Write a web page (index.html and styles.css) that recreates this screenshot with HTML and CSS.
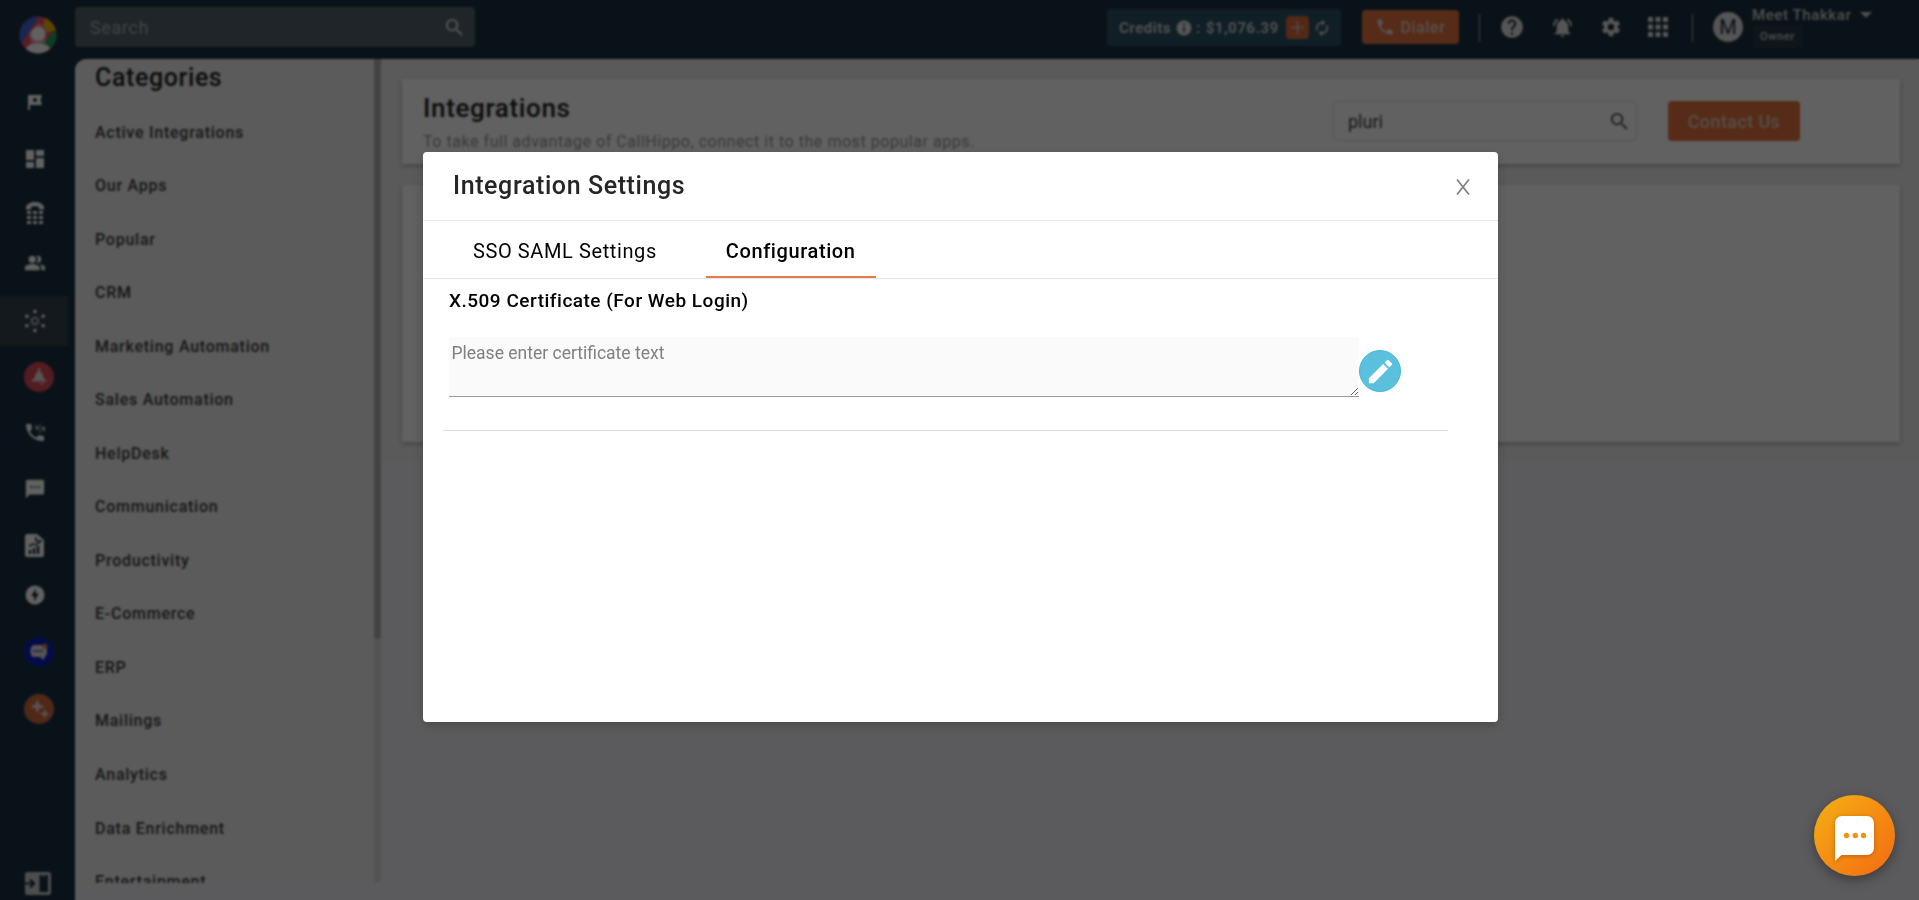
FILE: index.html
```html
<!DOCTYPE html>
<html lang="en">
<head>
    <meta charset="UTF-8">
    <meta name="viewport" content="width=device-width, initial-scale=1.0">
    <title>Integrations</title>
    <link rel="stylesheet" href="styles.css">
</head>
<body>

<div class="app">
    <!-- Sidebar -->
    <aside class="sidebar">
        <svg class="logo" width="38" height="38" viewBox="0 0 38 38">
            <defs><clipPath id="logoClip"><circle cx="19" cy="19" r="18.5"/></clipPath></defs>
            <g clip-path="url(#logoClip)">
                <rect width="38" height="38" fill="#e8505e"/>
                <path d="M0 0H20L2 28H0z" fill="#3c66d8"/>
                <path d="M27 0L38 4V14L28 16L24 9z" fill="#f2b50c"/>
                <path d="M38 12V36L25 27z" fill="#16a85a"/>
                <path d="M20 7L28 14L26 27H12L10 17z" fill="#e99ba6"/>
                <circle cx="19" cy="18" r="7" fill="#fff"/>
                <ellipse cx="19" cy="34" rx="12" ry="7" fill="#fff"/>
            </g>
        </svg>
        <nav class="side-nav">
            <a class="side-item"><svg width="16" height="17" viewBox="0 0 16 17"><path fill-rule="evenodd" d="M1 1h14l-1.500 5L15 11H3v5H1zM8 3.500l-2.500 2.500L8 8.500 10.500 6z"/></svg></a>
            <a class="side-item"><svg width="24" height="24" viewBox="0 0 24 24"><path d="M3 13h8V3H3v10zm0 8h8v-6H3v6zm10 0h8V11h-8v10zm0-18v6h8V3h-8z"/></svg></a>
            <a class="side-item side-dial"><svg width="18" height="23" viewBox="0 0 18 23"><path d="M9 0C4 0 0 2.500 0 5.500v2h5V5c2-1 6-1 8 0v2.500h5v-2C18 2.500 14 0 9 0z"/><path d="M1 9h4v3H1zm6 0h4v3H7zm6 0h4v3h-4zM1 14h4v3H1zm6 0h4v3H7zm6 0h4v3h-4zM1 19h4v3H1zm6 0h4v3H7zm6 0h4v3h-4z"/></svg></a>
            <a class="side-item side-people"><svg width="22" height="22" viewBox="0 0 24 24"><path d="M16.670 13.130C18.040 14.060 19 15.320 19 17v3h4v-3c0-2.180-3.570-3.470-6.330-3.870zM15 12c2.210 0 4-1.790 4-4s-1.790-4-4-4c-.47 0-.91.1-1.330.24a5.980 5.980 0 0 1 0 7.520c.42.14.86.24 1.330.24zM9 12a4 4 0 1 0 0-8 4 4 0 0 0 0 8zm0 1c-2.670 0-8 1.340-8 4v3h16v-3c0-2.660-5.330-4-8-4z"/></svg></a>
            <a class="side-item side-active"><svg width="24" height="24" viewBox="0 0 24 24"><circle cx="12" cy="12" r="3.200" fill="none" stroke="#b9bfc6" stroke-width="1.800"/><path d="M12 4v4M12 16v4M5 8l3 1.800M16 14.200l3 1.800M5 16l3-1.800M16 9.800L19 8" stroke="#5d6873" stroke-width="1"/><circle cx="12" cy="2.500" r="1.800"/><circle cx="12" cy="21.500" r="1.800"/><circle cx="3.800" cy="7.200" r="1.800"/><circle cx="20.200" cy="7.200" r="1.800"/><circle cx="3.800" cy="16.800" r="1.800"/><circle cx="20.200" cy="16.800" r="1.800"/></svg></a>
            <a class="side-item side-alert"><span class="side-badge red"><svg width="18" height="18" viewBox="0 0 18 18"><path d="M8.200 0h1.600l.4 3.500 2.800 3V9l4 4.500H1L5 9V6.500l2.800-3zM10 15h3.500a1.700 1.700 0 0 1-3.500 0z"/></svg></span></a>
            <a class="side-item"><svg width="22" height="22" viewBox="0 0 22 22"><path d="M5.500 9c1.400 2.900 3.800 5.200 6.700 6.600l2.200-2.200c.3-.3.700-.4 1-.2 1.100.4 2.300.6 3.600.6.600 0 1 .4 1 1V18c0 .6-.4 1-1 1C9.600 19 2 11.400 2 3c0-.600.4-1 1-1h3.500c.6 0 1 .4 1 1 0 1.200.2 2.400.6 3.600.1.300 0 .7-.2 1z"/><path d="M17 2l-5 5m0-4v4h4M15 11l5.500-5.500M16.500 5.500h4v4" fill="none" stroke="#fff" stroke-width="1"/></svg></a>
            <a class="side-item side-chat"><svg width="22" height="22" viewBox="0 0 24 24"><path d="M20 2H4c-1.100 0-1.990.9-1.990 2L2 22l4-4h14c1.100 0 2-.9 2-2V4c0-1.100-.9-2-2-2zM9 11H7V9h2v2zm4 0h-2V9h2v2zm4 0h-2V9h2v2z"/></svg></a>
            <a class="side-item side-report"><svg width="19" height="23" viewBox="0 0 19 23"><path d="M2 0h10l7 6v15a2 2 0 0 1-2 2H2a2 2 0 0 1-2-2V2C0 1 1 0 2 0z"/><path d="M5 20v-4M9 20v-6M13 20v-8" stroke="#1a313f" stroke-width="2.500"/><path d="M4 12l4-2 3 1 4-3M11 3v4h6" fill="none" stroke="#1a313f" stroke-width="1.500"/></svg></a>
            <a class="side-item side-bolt"><svg width="20" height="20" viewBox="0 0 20 20"><path fill-rule="evenodd" d="M10 .5a9.500 9.500 0 1 0 0 19 9.500 9.500 0 0 0 0-19zM10.800 3.500v5h3L9.200 16.500v-5.200h-3z"/></svg></a>
            <a class="side-item side-bot"><span class="side-badge blue"><svg width="20" height="18" viewBox="0 0 20 18"><path d="M5 2h10c2 0 3 2 3 6s-1 5-2 5.500L14.500 17 11 14H5c-2.500 0-3.500-2-3.500-6S3 2 5 2z"/><path d="M4.500 8h9" stroke="#2446c8" stroke-width="2" stroke-dasharray="2 1.500"/><circle cx="16" cy="3" r="2.600" fill="#c98722"/></svg></span></a>
            <a class="side-item"><span class="side-badge orange"><svg width="19" height="19" viewBox="0 0 18 18"><path d="M7 0l1.800 4.900L13.500 7 8.800 8.900 7 13.500 5.200 8.900.5 7l4.700-2.100zM14 9.500l1.300 3.200L18.500 14l-3.200 1.300L14 18.500l-1.300-3.200L9.500 14l3.200-1.300z"/></svg></span></a>
        </nav>
        <svg class="side-toggle" width="26" height="23" viewBox="0 0 26 23"><rect width="26" height="23" rx="2.500" fill="#c8cdce"/><rect x="14.500" y="3" width="8.500" height="17" fill="#1a313f"/><path d="M0 11.500h8M5 7.500l4 4-4 4" fill="none" stroke="#1a313f" stroke-width="2.200"/><path d="M17 3l1.500 2L20 3z" fill="#c8cdce"/></svg>
    </aside>

    <div class="main">
        <!-- Top bar -->
        <header class="topbar">
            <div class="top-search">
                <span>Search</span>
                <svg width="23" height="23" viewBox="0 0 24 24"><path d="M15.500 14h-.79l-.28-.27A6.470 6.470 0 0 0 16 9.500 6.500 6.500 0 1 0 9.500 16c1.610 0 3.090-.59 4.230-1.570l.27.28v.79l5 4.990L20.490 19l-4.990-5zm-6 0a4.500 4.500 0 1 1 0-9 4.500 4.500 0 0 1 0 9z"/></svg>
            </div>
            <div class="credits">
                <span>Credits</span>
                <svg class="info" width="16" height="16" viewBox="0 0 16 16"><path fill-rule="evenodd" d="M8 .5a7.500 7.500 0 1 0 0 15 7.500 7.500 0 0 0 0-15zM7.200 3.500h1.600v2H7.200zM7.200 6.800h1.600v5.400H7.200z"/></svg>
                <span class="colon">:</span>
                <span class="amount">$1,076.39</span>
                <span class="plus"><svg width="13" height="13" viewBox="0 0 13 13"><path d="M6.500 0v13M0 6.500h13" stroke="#d8c4bb" stroke-width="1.500"/></svg></span>
                <svg class="refresh" width="18" height="18" viewBox="0 0 24 24"><path d="M12 6v3l4-4-4-4v3a8 8 0 0 0-6.760 12.260L6.700 14.800A5.870 5.870 0 0 1 6 12a6 6 0 0 1 6-6zm6.760 1.740L17.300 9.200c.44.84.7 1.790.7 2.800a6 6 0 0 1-6 6v-3l-4 4 4 4v-3a8 8 0 0 0 6.760-12.260z"/></svg>
            </div>
            <button class="dialer"><svg width="20" height="20" viewBox="0 0 24 24"><path d="M6.620 10.790c1.440 2.830 3.760 5.140 6.590 6.590l2.200-2.200c.27-.27.67-.36 1.020-.24 1.120.37 2.330.57 3.570.57.55 0 1 .45 1 1V20c0 .55-.45 1-1 1-9.390 0-17-7.610-17-17 0-.55.45-1 1-1h3.500c.55 0 1 .45 1 1 0 1.250.2 2.450.57 3.570.11.35.03.74-.25 1.020l-2.200 2.200z"/></svg>Dialer</button>
            <span class="sep"></span>
            <div class="top-icons">
                <svg width="26" height="26" viewBox="0 0 24 24"><path d="M12 2C6.480 2 2 6.480 2 12s4.480 10 10 10 10-4.480 10-10S17.520 2 12 2zm1 17h-2v-2h2v2zm2.070-7.750l-.9.92C13.450 12.900 13 13.500 13 15h-2v-.5c0-1.100.45-2.100 1.170-2.830l1.240-1.260c.37-.36.59-.86.59-1.410 0-1.100-.9-2-2-2s-2 .9-2 2H8c0-2.210 1.790-4 4-4s4 1.790 4 4c0 .88-.36 1.680-.93 2.250z"/></svg>
                <svg width="23" height="23" viewBox="0 0 24 24"><path d="M7.580 4.080L6.150 2.650C3.750 4.480 2.170 7.300 2.030 10.500h2a8.450 8.450 0 0 1 3.550-6.420zm12.390 6.420h2c-.15-3.200-1.730-6.020-4.120-7.850l-1.420 1.430a8.500 8.500 0 0 1 3.540 6.420zM18 11c0-3.070-1.640-5.640-4.500-6.320V4c0-.83-.67-1.500-1.500-1.500s-1.500.67-1.500 1.500v.68C7.630 5.360 6 7.920 6 11v5l-2 2v1h16v-1l-2-2v-5zm-6 11c.14 0 .27-.01.4-.04.65-.14 1.180-.58 1.440-1.180.1-.24.15-.5.150-.78h-4c.01 1.100.9 2 2.010 2z"/></svg>
                <svg width="22" height="22" viewBox="0 0 24 24"><path d="M19.430 12.980c.04-.32.07-.64.07-.98s-.03-.66-.07-.98l2.110-1.650c.19-.15.24-.42.12-.64l-2-3.460c-.12-.22-.39-.3-.61-.22l-2.490 1c-.52-.4-1.080-.73-1.690-.98l-.38-2.650A.49.49 0 0 0 14 2h-4c-.25 0-.46.18-.49.42l-.38 2.650c-.61.25-1.170.59-1.690.98l-2.490-1c-.23-.09-.49 0-.61.22l-2 3.460c-.13.22-.07.49.12.64l2.110 1.650c-.04.32-.07.65-.07.98s.03.66.07.98l-2.110 1.650c-.19.15-.24.42-.12.64l2 3.460c.12.22.39.3.61.22l2.490-1c.52.4 1.080.73 1.690.98l.38 2.650c.03.24.24.42.49.42h4c.25 0 .46-.18.49-.42l.38-2.650c.61-.25 1.170-.59 1.690-.98l2.490 1c.23.09.49 0 .61-.22l2-3.460c.12-.22.07-.49-.12-.64l-2.110-1.650zM12 15.500a3.500 3.500 0 1 1 0-7 3.500 3.500 0 0 1 0 7z"/></svg>
                <svg width="20" height="20" viewBox="0 0 20 20"><path d="M0 0h5v5H0zM7.500 0h5v5h-5zM15 0h5v5h-5zM0 7.500h5v5H0zM7.500 7.500h5v5h-5zM15 7.500h5v5h-5zM0 15h5v5H0zM7.500 15h5v5h-5zM15 15h5v5h-5z"/></svg>
            </div>
            <span class="sep"></span>
            <div class="user">
                <span class="avatar">M</span>
                <div class="user-info">
                    <div class="user-name">Meet Thakkar <span class="caret"></span></div>
                    <span class="role">Owner</span>
                </div>
            </div>
        </header>

        <div class="page">
            <!-- Categories -->
            <div class="categories">
                <div class="category-list">
                    <h2>Categories</h2>
                    <ul>
                        <li>Active Integrations</li>
                        <li>Our Apps</li>
                        <li>Popular</li>
                        <li>CRM</li>
                        <li>Marketing Automation</li>
                        <li>Sales Automation</li>
                        <li>HelpDesk</li>
                        <li>Communication</li>
                        <li>Productivity</li>
                        <li>E-Commerce</li>
                        <li>ERP</li>
                        <li>Mailings</li>
                        <li>Analytics</li>
                        <li>Data Enrichment</li>
                        <li>Entertainment</li>
                    </ul>
                </div>
                <div class="scrollbar"><div class="scroll-thumb"></div></div>
            </div>

            <!-- Integrations -->
            <div class="content">
                <div class="card card-head">
                    <div class="card-title">
                        <h1>Integrations</h1>
                        <p>To take full advantage of CallHippo, connect it to the most popular apps.</p>
                    </div>
                    <div class="card-search">
                        <span>pluri</span>
                        <svg width="23" height="23" viewBox="0 0 24 24"><path d="M15.500 14h-.79l-.28-.27A6.470 6.470 0 0 0 16 9.500 6.500 6.500 0 1 0 9.500 16c1.610 0 3.090-.59 4.230-1.570l.27.28v.79l5 4.990L20.490 19l-4.990-5zm-6 0a4.500 4.500 0 1 1 0-9 4.500 4.500 0 0 1 0 9z"/></svg>
                    </div>
                    <button class="contact">Contact Us</button>
                </div>
                <div class="card card-list"></div>
            </div>
        </div>
    </div>
</div>

<!-- Modal -->
<div class="overlay">
    <div class="modal">
        <div class="modal-header">
            <h3>Integration Settings</h3>
            <svg class="close" width="16" height="16" viewBox="0 0 16 16"><path d="M2 .5l12 15M14 .5L2 15.500" stroke="#808080" stroke-width="1.700"/></svg>
        </div>
        <div class="tabs">
            <div class="tab">SSO SAML Settings</div>
            <div class="tab tab-active">Configuration</div>
        </div>
        <div class="modal-body">
            <label class="cert-label" for="cert">X.509 Certificate (For Web Login)</label>
            <div class="cert-row">
                <textarea id="cert" placeholder="Please enter certificate text"></textarea>
                <button class="edit-btn"><svg width="31" height="31" viewBox="0 0 24 24"><path d="M3 17.250V21h3.750L17.810 9.940l-3.750-3.750L3 17.250zM20.710 7.040a1 1 0 0 0 0-1.410l-2.340-2.340a1 1 0 0 0-1.410 0l-1.830 1.830 3.750 3.750 1.830-1.830z"/></svg></button>
            </div>
            <hr>
        </div>
    </div>
</div>

<!-- Chat widget -->
<div class="chat-widget">
    <svg width="40" height="46" viewBox="0 0 40 46"><path d="M7 0h25a7 7 0 0 1 7 7v25a7 7 0 0 1-7 7H6.500L0 45V7a7 7 0 0 1 7-7z" fill="#fff"/><g fill="#f2930f"><circle cx="11.500" cy="19.500" r="2.700"/><circle cx="20.300" cy="19.500" r="2.700"/><circle cx="28.500" cy="19.500" r="2.700"/></g></svg>
</div>

</body>
</html>
```

FILE: styles.css
```css
* {
    box-sizing: border-box;
}
body {
    margin: 0;
    height: 900px;
    overflow: hidden;
    font-family: Roboto, "Liberation Sans", sans-serif;
    letter-spacing: 0.6px;
    color: #222;
}
h1, h2, h3, p, ul {
    margin: 0;
    padding: 0;
    font-weight: 500;
}
button {
    font-family: inherit;
    letter-spacing: inherit;
    border: none;
    padding: 0;
    cursor: pointer;
}
svg {
    display: block;
    flex: none;
}
.app {
    display: flex;
    height: 900px;
    background: #1a313f;
}

/* sidebar */
.sidebar {
    width: 75px;
    display: flex;
    flex-direction: column;
    padding: 16px 0 5px;
}
.logo {
    margin-left: 19px;
}
.side-nav {
    display: flex;
    flex-direction: column;
    gap: 6.5px;
    margin-top: 23px;
}
.side-item {
    width: 68px;
    height: 50px;
    display: flex;
    align-items: center;
    justify-content: center;
    padding-left: 1px;
}
.side-item svg {
    fill: #fff;
}
.side-dial {
    margin-top: -2px;
}
.side-people {
    margin-top: -7px;
}
.side-active {
    margin-top: 2px;
    background: #36424f;
}
.side-alert {
    margin-top: -1px;
}
.side-chat {
    margin-top: -1px;
}
.side-bolt {
    margin-top: -7px;
}
.side-bot {
    margin-top: 1px;
}
.side-badge {
    width: 30px;
    height: 30px;
    margin-left: 9px;
    border-radius: 50%;
    display: flex;
    align-items: center;
    justify-content: center;
}
.side-badge svg {
    fill: #e6dcdc;
}
.red {
    background: #d84a58;
}
.blue {
    background: #0a20c0;
}
.orange {
    background: #d06a40;
}
.side-toggle {
    margin: auto 0 0 25px;
}

/* top bar */
.main {
    flex: 1;
    display: flex;
    flex-direction: column;
    min-width: 0;
}
.topbar {
    height: 59px;
    flex: none;
    display: flex;
    align-items: flex-start;
    color: #c8ccce;
}
.topbar svg {
    fill: #e0e0e0;
}
.top-search {
    width: 400px;
    height: 40px;
    margin-top: 7px;
    padding: 0 9px 0 15px;
    display: flex;
    align-items: center;
    justify-content: space-between;
    background: #53636a;
    border-radius: 4px;
    font-size: 18px;
    color: #a6b0b5;
}
.credits {
    width: 234px;
    height: 37px;
    margin: 9px 0 0 632px;
    padding-left: 12px;
    display: flex;
    align-items: center;
    background: #2b5164;
    border-radius: 4px;
    font-size: 15px;
    font-weight: 700;
    letter-spacing: 0.5px;
}
.info {
    margin-left: 5px;
}
.colon {
    margin: 0 5px 0 4px;
}
.plus {
    width: 23px;
    height: 23px;
    margin-left: 7px;
    display: flex;
    align-items: center;
    justify-content: center;
    background: #d9693c;
    border-radius: 4px;
}
.refresh {
    margin-left: 4px;
}
.dialer {
    width: 97px;
    height: 34px;
    margin: 10px 0 0 21px;
    display: flex;
    align-items: center;
    justify-content: center;
    gap: 5px;
    background: #e3733f;
    border-radius: 4px;
    color: #e8cfc4;
    font-size: 16px;
    font-weight: 500;
}
.sep {
    width: 1px;
    height: 28px;
    margin: 14px 0 0 20px;
    background: #a0a8ac;
}
.top-icons {
    height: 54px;
    margin-left: 19px;
    display: flex;
    align-items: center;
    gap: 26px;
}
.user {
    display: flex;
    margin-left: 20px;
}
.top-icons + .sep {
    margin-left: 24px;
}
.avatar {
    width: 30px;
    height: 30px;
    margin-top: 12px;
    border-radius: 50%;
    background: #e0e0e0;
    color: #1a313f;
    font-size: 20px;
    letter-spacing: 0;
    line-height: 31px;
    text-align: center;
}
.user-info {
    margin: 5px 0 0 9px;
}
.user-name {
    display: flex;
    align-items: center;
    font-size: 15px;
    font-weight: 500;
    line-height: 20px;
}
.caret {
    margin-left: 9px;
    border: 6px solid transparent;
    border-top-color: #c8ccce;
    border-bottom: 0;
}
.role {
    display: inline-block;
    margin-left: 1px;
    padding: 0 7px;
    height: 23px;
    line-height: 23px;
    font-size: 11px;
    font-weight: 500;
    background: #263b49;
    border-radius: 4px;
}

/* page */
.page {
    flex: 1;
    display: flex;
    min-height: 0;
    background: #f0f0f4;
    border-top-left-radius: 12px;
    overflow: hidden;
}
.categories {
    width: 306px;
    height: 824px;
    display: flex;
}
.category-list {
    flex: 1;
    padding: 4px 20px 0;
    overflow: hidden;
    background: #efefef;
}
.category-list h2 {
    font-size: 25px;
    line-height: 29px;
}
.category-list ul {
    list-style: none;
    margin-top: 13.8px;
}
.category-list li {
    height: 53.53px;
    line-height: 53.5px;
    font-size: 16px;
    letter-spacing: 0.75px;
    color: #3c3c3c;
}
.scrollbar {
    width: 7px;
    background: #dadada;
    border-radius: 0 0 4px 4px;
}
.scroll-thumb {
    height: 580px;
    background: #b0b0b0;
    border-radius: 0 0 4px 4px;
}
.content {
    flex: 1;
    height: 402px;
    padding: 20px 19px 0 21px;
    background: #ededed;
}
.card {
    background: #fff;
    box-shadow: 0 2px 5px rgba(0, 0, 0, 0.25);
}
.card-head {
    height: 85px;
    padding: 22px 100px 0 21px;
    display: flex;
}
.card-title {
    flex: 1;
    margin-top: -10px;
}
.card-title h1 {
    font-size: 26px;
    line-height: 34px;
    letter-spacing: 0.65px;
}
.card-title p {
    font-size: 16px;
    line-height: 22px;
    margin-top: 6px;
    font-weight: 400;
    letter-spacing: 0.54px;
    color: #999;
}
.card-search {
    width: 304px;
    height: 40px;
    padding: 0 5px 0 14px;
    display: flex;
    align-items: center;
    justify-content: space-between;
    border: 1px solid #e0e0e0;
    border-radius: 4px;
    font-size: 18px;
    letter-spacing: 0;
    color: #444;
}
.card-search svg {
    fill: #555;
}
.contact {
    width: 132px;
    height: 40px;
    margin-left: 31px;
    background: #e3733f;
    border-radius: 4px;
    color: #e0c8bc;
    font-size: 18px;
    font-weight: 500;
    letter-spacing: 0.4px;
}
.card-list {
    height: 257px;
    margin-top: 21px;
}

/* modal */
.overlay {
    position: fixed;
    inset: 0;
    background: rgba(0, 0, 0, 0.62);
    backdrop-filter: blur(1px);
}
.modal {
    width: 1075px;
    height: 570px;
    margin: 152px 0 0 423px;
    background: #fff;
    border-radius: 4px;
    box-shadow: 0 4px 12px rgba(0, 0, 0, 0.2);
    color: #000;
}
.modal-header {
    height: 69px;
    padding: 0 27px 0 30px;
    display: flex;
    align-items: center;
    justify-content: space-between;
    border-bottom: 1px solid #e8e8e8;
}
.modal-header h3 {
    margin-top: -2px;
    font-size: 25px;
    color: #262626;
}
.close {
    margin-top: 2px;
}
.tabs {
    height: 58px;
    padding-left: 30px;
    display: flex;
    gap: 29px;
    border-bottom: 1px solid #e8e8e8;
}
.tab {
    padding: 0 20px;
    line-height: 61px;
    font-size: 20px;
}
.tab-active {
    height: 57px;
    font-weight: 500;
    border-bottom: 2px solid #e27b48;
}
.modal-body {
    padding: 9px 50px 0 20px;
}
.cert-label {
    display: block;
    margin-left: 6px;
    line-height: 26px;
    font-size: 19px;
    font-weight: 500;
    letter-spacing: 0.5px;
}
.cert-row {
    display: flex;
    align-items: center;
    margin: 23px 0 0 6px;
}
textarea {
    width: 910px;
    height: 60px;
    padding: 3px 2px 2px 2.5px;
    border: none;
    border-bottom: 1px solid #999;
    background: #fafafa;
    font-family: inherit;
    font-size: 17.5px;
    line-height: 27px;
    resize: vertical;
}
textarea::placeholder {
    color: #808080;
}
.edit-btn {
    width: 42px;
    height: 42px;
    margin-top: 8px;
    display: flex;
    align-items: center;
    justify-content: center;
    background: #5bc0de;
    border: 1px solid #46b8da;
    border-radius: 50%;
}
.edit-btn svg {
    fill: #fff;
}
hr {
    margin: 33px 0 0;
    border: none;
    border-top: 1px solid #dcdcdc;
}

/* chat widget */
.chat-widget {
    position: fixed;
    right: 24px;
    bottom: 24px;
    width: 81px;
    height: 81px;
    padding: 21px 0 0 21px;
    border-radius: 50%;
    background: linear-gradient(135deg, #f5b014, #f46a12);
    box-shadow: 0 4px 12px rgba(0, 0, 0, 0.35);
}
.chat-widget svg {
    filter: drop-shadow(0 1px 2px rgba(0, 0, 0, 0.25));
}
```
